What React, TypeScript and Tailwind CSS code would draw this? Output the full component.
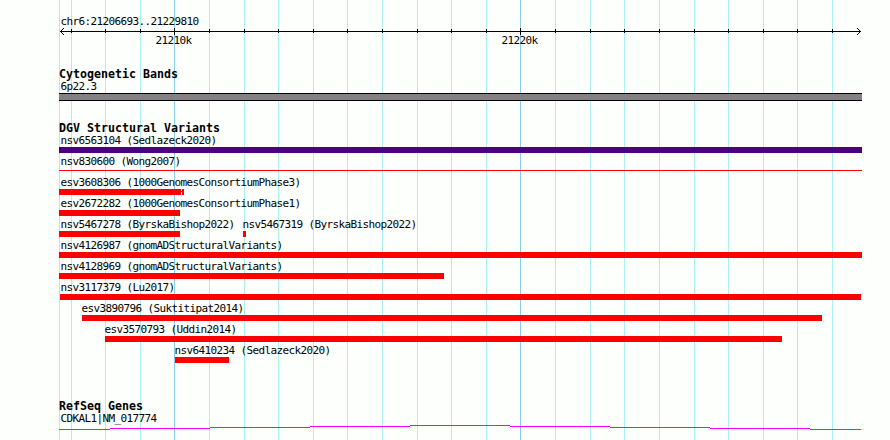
const LEFT = 59;
const WIDTH = 803;

const minorLines = [
  59, 71, 105, 140, 209, 244, 278, 313, 347, 382, 417, 451, 486, 555, 590, 624, 659, 694, 728, 763, 797, 832,
];

const majorLines = [174, 520];

type Feature = {
  label: string;
  start: number;
  end: number;
  labelX?: number;
  kind?: "gain" | "thin";
  tail?: boolean;
};

const rows: Feature[][] = [
  [{ label: "nsv6563104 (Sedlazeck2020)", start: 59, end: 862, kind: "gain" }],
  [{ label: "nsv830600 (Wong2007)", start: 59, end: 862, kind: "thin" }],
  [{ label: "esv3608306 (1000GenomesConsortiumPhase3)", start: 59, end: 184, tail: true }],
  [{ label: "esv2672282 (1000GenomesConsortiumPhase1)", start: 59, end: 180 }],
  [
    { label: "nsv5467278 (ByrskaBishop2022)", start: 59, end: 180 },
    { label: "nsv5467319 (ByrskaBishop2022)", start: 243, end: 246, labelX: 242 },
  ],
  [{ label: "nsv4126987 (gnomADStructuralVariants)", start: 59, end: 862 }],
  [{ label: "nsv4128969 (gnomADStructuralVariants)", start: 59, end: 444 }],
  [{ label: "nsv3117379 (Lu2017)", start: 60, end: 861 }],
  [{ label: "esv3890796 (Suktitipat2014)", start: 82, end: 822, labelX: 81 }],
  [{ label: "esv3570793 (Uddin2014)", start: 105, end: 782, labelX: 104 }],
  [{ label: "nsv6410234 (Sedlazeck2020)", start: 175, end: 229, labelX: 174 }],
];

const labelFont =
  "block whitespace-pre pl-[0.5px] font-['DejaVu_Sans_Mono',monospace] text-[11px] leading-[13px] tracking-[-0.622px] text-black";

function GridLines() {
  return (
    <svg className="absolute inset-0" width="890" height="440" shapeRendering="crispEdges">
      {minorLines.map((x) => (
        <rect key={x} x={x} y="0" width="1" height="440" fill="#afeeee" />
      ))}
      {majorLines.map((x) => (
        <rect key={x} x={x} y="0" width="1" height="440" fill="#87ceeb" />
      ))}
    </svg>
  );
}

function Ruler() {
  return (
    <header className="h-[67px] pt-[15px]">
      <div className={`${labelFont} ml-px`}>chr6:21206693..21229810</div>
      <svg className="block" width={WIDTH} height="7" shapeRendering="crispEdges">
        <rect x="1" y="3" width="801" height="1" />
        {minorLines.slice(1).map((x) => (
          <rect key={x} x={x - LEFT} y="1" width="1" height="4" />
        ))}
        {majorLines.map((x) => (
          <rect key={x} x={x - LEFT} y="0" width="1" height="7" />
        ))}
        {[1, 2, 3].map((d) => (
          <g key={d}>
            <rect x={1 + d} y={3 - d} width="1" height="1" />
            <rect x={1 + d} y={3 + d} width="1" height="1" />
            <rect x={801 - d} y={3 - d} width="1" height="1" />
            <rect x={801 - d} y={3 + d} width="1" height="1" />
          </g>
        ))}
      </svg>
      <div className="-mt-px flex">
        <span className={`${labelFont} ml-24 w-[346px]`}>21210k</span>
        <span className={labelFont}>21220k</span>
      </div>
    </header>
  );
}

function TrackTitle({ children }: { children: string }) {
  return (
    <h2 className="h-[13px] whitespace-pre font-['DejaVu_Sans_Mono',monospace] text-[11.63px] leading-[15px] font-bold text-black">
      {children}
    </h2>
  );
}

function FeatureRow({ features }: { features: Feature[] }) {
  return (
    <li className="grid h-[21px] grid-cols-1">
      {features.map((f) => (
        <div key={f.label} className="col-start-1 row-start-1">
          <span className={labelFont} style={{ marginLeft: (f.labelX ?? 60) - LEFT }}>
            {f.label}
          </span>
          <div className="flex h-1.5" style={{ marginLeft: f.start - LEFT, width: f.end - f.start }}>
            {f.kind === "thin" && <i className="mt-[2px] h-px w-full bg-[#ff0000]" />}
            {f.kind === "gain" && <i className="h-full w-full bg-[#4b0082]" />}
            {!f.kind && <i className="h-full flex-1 bg-[#ff0000]" />}
            {f.tail && (
              <>
                <i className="mt-[2px] h-px w-px bg-[#ff0000]" />
                <i className="h-full w-[2px] bg-[#ff0000]" />
              </>
            )}
          </div>
        </div>
      ))}
    </li>
  );
}

function GeneLine() {
  return (
    <svg className="block" width={WIDTH} height="5" shapeRendering="crispEdges" fill="#ff00ff">
      {[4, 3, 2, 1, 0, 1, 2, 3, 4].map((y, i) => {
        const start = i === 0 ? 0 : 51 + (i - 1) * 100;
        const end = Math.min(51 + i * 100, 802);
        return <rect key={i} x={start} y={y} width={end - start} height="1" />;
      })}
    </svg>
  );
}

export default function App() {
  return (
    <div className="relative h-[440px] w-[890px] overflow-hidden bg-[#fdfffc]">
      <GridLines />
      <main className="relative ml-[59px] w-[803px]">
        <Ruler />

        <section className="h-[54px]">
          <TrackTitle>Cytogenetic Bands</TrackTitle>
          <span className={`${labelFont} ml-px`}>6p22.3</span>
          <div className="h-2 border-y border-black bg-[#848084]" />
        </section>

        <section className="h-[278px]">
          <TrackTitle>DGV Structural Variants</TrackTitle>
          <ul>
            {rows.map((features) => (
              <FeatureRow key={features[0].label} features={features} />
            ))}
          </ul>
        </section>

        <section>
          <TrackTitle>RefSeq Genes</TrackTitle>
          <span className={`${labelFont} ml-px`}>CDKAL1|NM_017774</span>
          <GeneLine />
        </section>
      </main>
    </div>
  );
}
